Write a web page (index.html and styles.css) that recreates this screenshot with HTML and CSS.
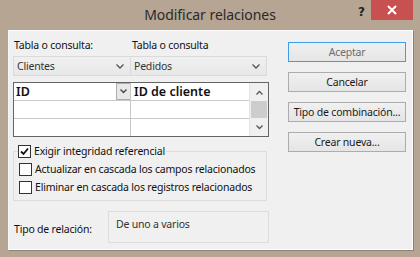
FILE: index.html
```html
<!DOCTYPE html>
<html lang="es">
<head>
<meta charset="utf-8">
<title>Modificar relaciones</title>
<link rel="stylesheet" href="styles.css">
</head>
<body>
<div class="window">
  <div class="titlebar">
    <div></div>
    <div class="title">Modificar relaciones</div>
    <div class="controls">
      <span class="help">?</span>
      <span class="close"><svg width="10" height="10" viewBox="0 0 10 10"><path d="M1 1L9 9M9 1L1 9" stroke="#fff" stroke-width="2" fill="none"/></svg></span>
    </div>
  </div>
  <div class="content">
    <div class="left">
      <div class="labels">
        <span>Tabla o consulta:</span>
        <span>Tabla o consulta</span>
      </div>
      <div class="combos">
        <div class="combo c1"><span>Clientes</span><svg class="chev" width="8" height="5" viewBox="0 0 8 5"><path d="M0.5 0.5L4 4L7.5 0.5" stroke="#555" stroke-width="1.3" fill="none"/></svg></div>
        <div class="combo c2"><span>Pedidos</span><svg class="chev" width="8" height="5" viewBox="0 0 8 5"><path d="M0.5 0.5L4 4L7.5 0.5" stroke="#555" stroke-width="1.3" fill="none"/></svg></div>
      </div>
      <div class="grid">
        <div class="cols">
          <div class="row">
            <div class="cell a"><span>ID</span><span class="dd"><svg width="7" height="5" viewBox="0 0 7 5"><path d="M0.5 0.5L3.5 3.5L6.5 0.5" stroke="#444" stroke-width="1.3" fill="none"/></svg></span></div>
            <div class="cell b">ID de cliente</div>
          </div>
          <div class="row">
            <div class="cell a"></div>
            <div class="cell b"></div>
          </div>
          <div class="row last">
            <div class="cell a"></div>
            <div class="cell b"></div>
          </div>
        </div>
        <div class="scroll">
          <div class="sbtn"><svg width="7" height="5" viewBox="0 0 7 5"><path d="M0.5 4.5L3.5 1.5L6.5 4.5" stroke="#555" stroke-width="1.3" fill="none"/></svg></div>
          <div class="thumb"></div>
          <div class="sbtn"><svg width="7" height="5" viewBox="0 0 7 5"><path d="M0.5 0.5L3.5 3.5L6.5 0.5" stroke="#555" stroke-width="1.3" fill="none"/></svg></div>
        </div>
      </div>
      <fieldset class="group">
        <legend class="check"><span class="box"><svg width="11" height="11" viewBox="0 0 11 11"><path d="M2 5.5L4.5 8L9 2.5" stroke="#111" stroke-width="1.8" fill="none"/></svg></span><span>Exigir integridad referencial</span></legend>
        <div class="check"><span class="box"></span><span>Actualizar en cascada los campos relacionados</span></div>
        <div class="check"><span class="box"></span><span>Eliminar en cascada los registros relacionados</span></div>
      </fieldset>
      <div class="relation">
        <span class="rlabel">Tipo de relación:</span>
        <div class="rbox">De uno a varios</div>
      </div>
    </div>
    <div class="right">
      <div class="btn default">Aceptar</div>
      <div class="btn">Cancelar</div>
      <div class="btn">Tipo de combinación...</div>
      <div class="btn">Crear nueva...</div>
    </div>
  </div>
</div>
</body>
</html>
```
FILE: styles.css
```css
html, body {
  margin: 0;
  padding: 0;
}
body {
  width: 420px;
  height: 257px;
  background: #b6a592;
  font-family: "Noto Sans", "Open Sans", sans-serif;
  color: #1e1e1e;
  overflow: hidden;
  white-space: nowrap;
}
.window {
  width: 420px;
  height: 257px;
  display: flex;
  flex-direction: column;
}
.titlebar {
  height: 30px;
  display: grid;
  grid-template-columns: 1fr auto 1fr;
  align-items: start;
}
.title {
  font-size: 14px;
  line-height: 30px;
  color: #2a2a2a;
  letter-spacing: -0.05px;
}
.controls {
  display: flex;
  justify-content: flex-end;
  align-items: flex-start;
  padding-right: 7px;
}
.help {
  font-family: "DejaVu Sans", sans-serif;
  font-weight: bold;
  font-size: 12px;
  line-height: 20px;
  color: #222;
  margin-right: 6px;
  margin-top: 2px;
}
.close {
  width: 42px;
  height: 20px;
  background: #c75050;
  display: flex;
  align-items: center;
  justify-content: center;
}
.content {
  margin: 0 8px;
  background: #f0f0f0;
  border-top: 1px solid #fdfdfd;
  border-left: 1px solid #f7f7f7;
  box-shadow: 1px 1px 0 #8a8276, inset -1px -1px 0 #ffffff;
  display: flex;
  padding: 7px 0 0 4px;
  box-sizing: border-box;
  height: 220px;
  width: 405px;
  font-size: 10.5px;
  letter-spacing: -0.2px;
}
.left {
  width: 256px;
  display: flex;
  flex-direction: column;
}
.labels {
  display: grid;
  grid-template-columns: 118px 1fr;
  line-height: 15px;
  padding-left: 1px;
  color: #111;
}
.combos {
  display: flex;
  margin-top: 3px;
}
.combo {
  height: 20px;
  box-sizing: border-box;
  border: 1px solid #dadada;
  background: linear-gradient(#f0f0f0, #e7e7e7);
  display: flex;
  align-items: center;
  justify-content: space-between;
  padding: 0 6px 0 3px;
  color: #333;
}
.c1 { width: 118px; }
.c2 { width: 136px; border-left: none; }
.grid {
  margin-top: 6px;
  width: 256px;
  height: 55px;
  box-sizing: border-box;
  border: 1px solid #646464;
  background: #fff;
  display: flex;
}
.cols {
  flex: 1;
  display: flex;
  flex-direction: column;
}
.row {
  display: flex;
  height: 18px;
  border-bottom: 1px solid #c8c8c8;
  box-sizing: border-box;
}
.row.last {
  border-bottom: none;
  height: 17px;
}
.cell {
  box-sizing: border-box;
  font-size: 12.5px;
  font-weight: 600;
  line-height: 17px;
  color: #111;
  letter-spacing: 0;
}
.cell.a {
  width: 117px;
  border-right: 1px solid #c8c8c8;
  display: flex;
  justify-content: space-between;
  padding-left: 2px;
}
.cell.b {
  flex: 1;
  padding-left: 3px;
}
.dd {
  width: 14px;
  height: 17px;
  box-sizing: border-box;
  border: 1px solid #adadad;
  border-right: none;
  background: #e8e8e8;
  display: flex;
  align-items: center;
  justify-content: center;
}
.scroll {
  width: 18px;
  background: #f0f0f0;
  border-left: 1px solid #e3e3e3;
  display: flex;
  flex-direction: column;
}
.sbtn {
  height: 18px;
  display: flex;
  align-items: center;
  justify-content: center;
}
.thumb {
  height: 17px;
  margin: 0 1px;
  background: #cdcdcd;
}
.group {
  margin: 5px 0 0 0;
  width: 254px;
  box-sizing: border-box;
  border: 1px solid #dcdcdc;
  padding: 0 0 4px 5px;
}
.group legend {
  padding: 0 1px 0 0;
  margin-left: -1px;
}
.check {
  display: flex;
  align-items: center;
  gap: 3px;
  line-height: 18px;
  height: 18px;
  color: #111;
}
.box {
  width: 11px;
  height: 11px;
  border: 1px solid #333;
  background: #fff;
  display: flex;
  align-items: center;
  justify-content: center;
}
.relation {
  display: flex;
  align-items: center;
  margin-top: 10px;
}
.rlabel {
  width: 94px;
  padding-left: 1px;
  padding-top: 4px;
  color: #111;
}
.rbox {
  width: 161px;
  height: 32px;
  box-sizing: border-box;
  border: 1px solid #dcdcdc;
  color: #333;
  padding: 5px 0 0 7px;
}
.right {
  margin-left: 19px;
  width: 118px;
  padding-top: 4px;
  display: flex;
  flex-direction: column;
  gap: 10px;
}
.btn {
  height: 20px;
  box-sizing: border-box;
  border: 1px solid #acacac;
  background: linear-gradient(#f0f0f0, #e5e5e5);
  line-height: 18px;
  text-align: center;
  color: #1a1a1a;
}
.btn.default {
  border-color: #3c9ee8;
  color: #6d6d6d;
}
```
